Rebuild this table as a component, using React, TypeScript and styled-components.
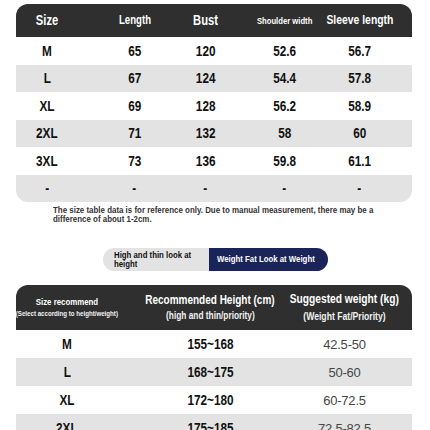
import styled, { createGlobalStyle } from "styled-components";

const GlobalStyle = createGlobalStyle`
    html, body {
        margin: 0;
        padding: 0;
        background: #ffffff;
        overflow: hidden;
    }
    body {
        font-family: "Liberation Sans", Arial, sans-serif;
        color: #111;
    }
`

const Page = styled.div`
    width: 430px;
    height: 430px;
    overflow: hidden;
    padding-top: 4px;
    box-sizing: border-box;
`

const Table = styled.div`
    width: 396px;
    margin-left: 16px;
    overflow: hidden;
`

const TopTable = styled(Table)`
    border-radius: 12px;
`

const BottomTable = styled(Table)`
    margin-top: 14px;
    border-radius: 12px 12px 0 0;
`

const HeadRow = styled.div<{ $cols: string; $height: number }>`
    display: grid;
    grid-template-columns: ${p => p.$cols};
    height: ${p => p.$height}px;
    background: #2f2f2f;
    color: #ffffff;
    align-items: center;
`

const Row = styled.div<{ $cols: string; $height: number; $shade: boolean }>`
    display: grid;
    grid-template-columns: ${p => p.$cols};
    height: ${p => p.$height}px;
    background: ${p => (p.$shade ? "#e3e3e3" : "#ffffff")};
    align-items: center;
`

const Cell = styled.div<{ $shift: number }>`
    display: flex;
    flex-direction: column;
    align-items: center;
    justify-content: center;
    text-align: center;
    white-space: nowrap;
    padding-left: ${p => Math.max(0, p.$shift * 2)}px;
    padding-right: ${p => Math.max(0, -p.$shift * 2)}px;
`

// the artwork uses a condensed bold face; squeeze Liberation Sans to match
const HeadText = styled.span<{ $size: number }>`
    display: inline-block;
    font-weight: 700;
    font-size: ${p => p.$size}px;
    line-height: 1.15;
    transform: scaleX(0.8);
`

const SubText = styled.span<{ $size: number }>`
    display: inline-block;
    font-weight: 700;
    font-size: ${p => p.$size}px;
    line-height: 1.15;
    margin-top: 3px;
    color: #f2f2f2;
    transform: scaleX(0.8);
`

const Value = styled.span`
    display: inline-block;
    font-weight: 700;
    font-size: 14px;
    color: #111;
    transform: scaleX(0.84);
`

const LightValue = styled.span`
    font-size: 13px;
    color: #454545;
    letter-spacing: -0.2px;
`

const Note = styled.p`
    margin: 4px 0 0 53px;
    font-weight: 700;
    font-size: 9px;
    line-height: 9px;
    color: #333;
    white-space: nowrap;
    transform: scaleX(0.88);
    transform-origin: left center;
`

const Toggle = styled.div`
    display: flex;
    width: 225px;
    height: 23px;
    margin: 24px auto 0;
    border-radius: 12px;
    overflow: hidden;
`

const ToggleOption = styled.div<{ $active: boolean; $width: number }>`
    width: ${p => p.$width}px;
    display: flex;
    align-items: center;
    box-sizing: border-box;
    padding-left: ${p => (p.$active ? 8 : 11)}px;
    background: ${p => (p.$active ? "#1b2459" : "#e3e3e3")};
    color: ${p => (p.$active ? "#ffffff" : "#111111")};
`

const ToggleLabel = styled.span`
    display: inline-block;
    font-weight: 700;
    font-size: 9.3px;
    line-height: 8.5px;
    white-space: nowrap;
    transform: scaleX(0.84);
    transform-origin: left center;
`

const sizeCols = [
    { label: "Size", size: 14, width: 75, shift: -6.5 },
    { label: "Length", size: 12, width: 79, shift: 4 },
    { label: "Bust", size: 14, width: 75, shift: -2 },
    { label: "Shoulder width", size: 9.6, width: 77, shift: 1 },
    { label: "Sleeve length", size: 13, width: 90, shift: -7.5 },
]

const sizeRows = [
    ["M", "65", "120", "52.6", "56.7"],
    ["L", "67", "124", "54.4", "57.8"],
    ["XL", "69", "128", "56.2", "58.9"],
    ["2XL", "71", "132", "58", "60"],
    ["3XL", "73", "136", "59.8", "61.1"],
    ["-", "-", "-", "-", "-"],
]

const recCols = [
    { label: "Size recommend", sub: "(Select according to height/weight)", size: 9.8, subSize: 7.7, width: 122, shift: -10 },
    { label: "Recommended Height (cm)", sub: "(high and thin/priority)", size: 12.5, subSize: 10.4, width: 139, shift: 2.5 },
    { label: "Suggested weight (kg)", sub: "(Weight Fat/Priority)", size: 12.8, subSize: 10.8, width: 135, shift: 0 },
]

const recRows = [
    ["M", "155~168", "42.5-50"],
    ["L", "168~175", "50-60"],
    ["XL", "172~180", "60-72.5"],
    ["2XL", "175~185", "72.5-82.5"],
]

const App = () => {
    const sizeTemplate = sizeCols.map(c => `${c.width}px`).join(" ")
    const recTemplate = recCols.map(c => `${c.width}px`).join(" ")

    return (
        <>
            <GlobalStyle />
            <Page>
                <TopTable>
                    <HeadRow $cols={sizeTemplate} $height={33}>
                        {sizeCols.map(col => (
                            <Cell key={col.label} $shift={col.shift}>
                                <HeadText $size={col.size}>{col.label}</HeadText>
                            </Cell>
                        ))}
                    </HeadRow>
                    {sizeRows.map((row, i) => (
                        <Row key={i} $cols={sizeTemplate} $height={27.5} $shade={i % 2 === 1}>
                            {row.map((value, j) => (
                                <Cell key={j} $shift={sizeCols[j].shift}>
                                    <Value>{value}</Value>
                                </Cell>
                            ))}
                        </Row>
                    ))}
                </TopTable>

                <Note>
                    The size table data is for reference only. Due to manual measurement, there may be a
                    <br />
                    difference of about 1-2cm.
                </Note>

                <Toggle>
                    <ToggleOption $active={false} $width={106}>
                        <ToggleLabel>High and thin look at<br />height</ToggleLabel>
                    </ToggleOption>
                    <ToggleOption $active={true} $width={119}>
                        <ToggleLabel>Weight Fat Look at Weight</ToggleLabel>
                    </ToggleOption>
                </Toggle>

                <BottomTable>
                    <HeadRow $cols={recTemplate} $height={45}>
                        {recCols.map(col => (
                            <Cell key={col.label} $shift={col.shift}>
                                <HeadText $size={col.size}>{col.label}</HeadText>
                                <SubText $size={col.subSize}>{col.sub}</SubText>
                            </Cell>
                        ))}
                    </HeadRow>
                    {recRows.map((row, i) => (
                        <Row key={i} $cols={recTemplate} $height={28} $shade={i % 2 === 1}>
                            <Cell $shift={recCols[0].shift}><Value>{row[0]}</Value></Cell>
                            <Cell $shift={recCols[1].shift}><Value>{row[1]}</Value></Cell>
                            <Cell $shift={recCols[2].shift}><LightValue>{row[2]}</LightValue></Cell>
                        </Row>
                    ))}
                </BottomTable>
            </Page>
        </>
    )
}

export default App;
